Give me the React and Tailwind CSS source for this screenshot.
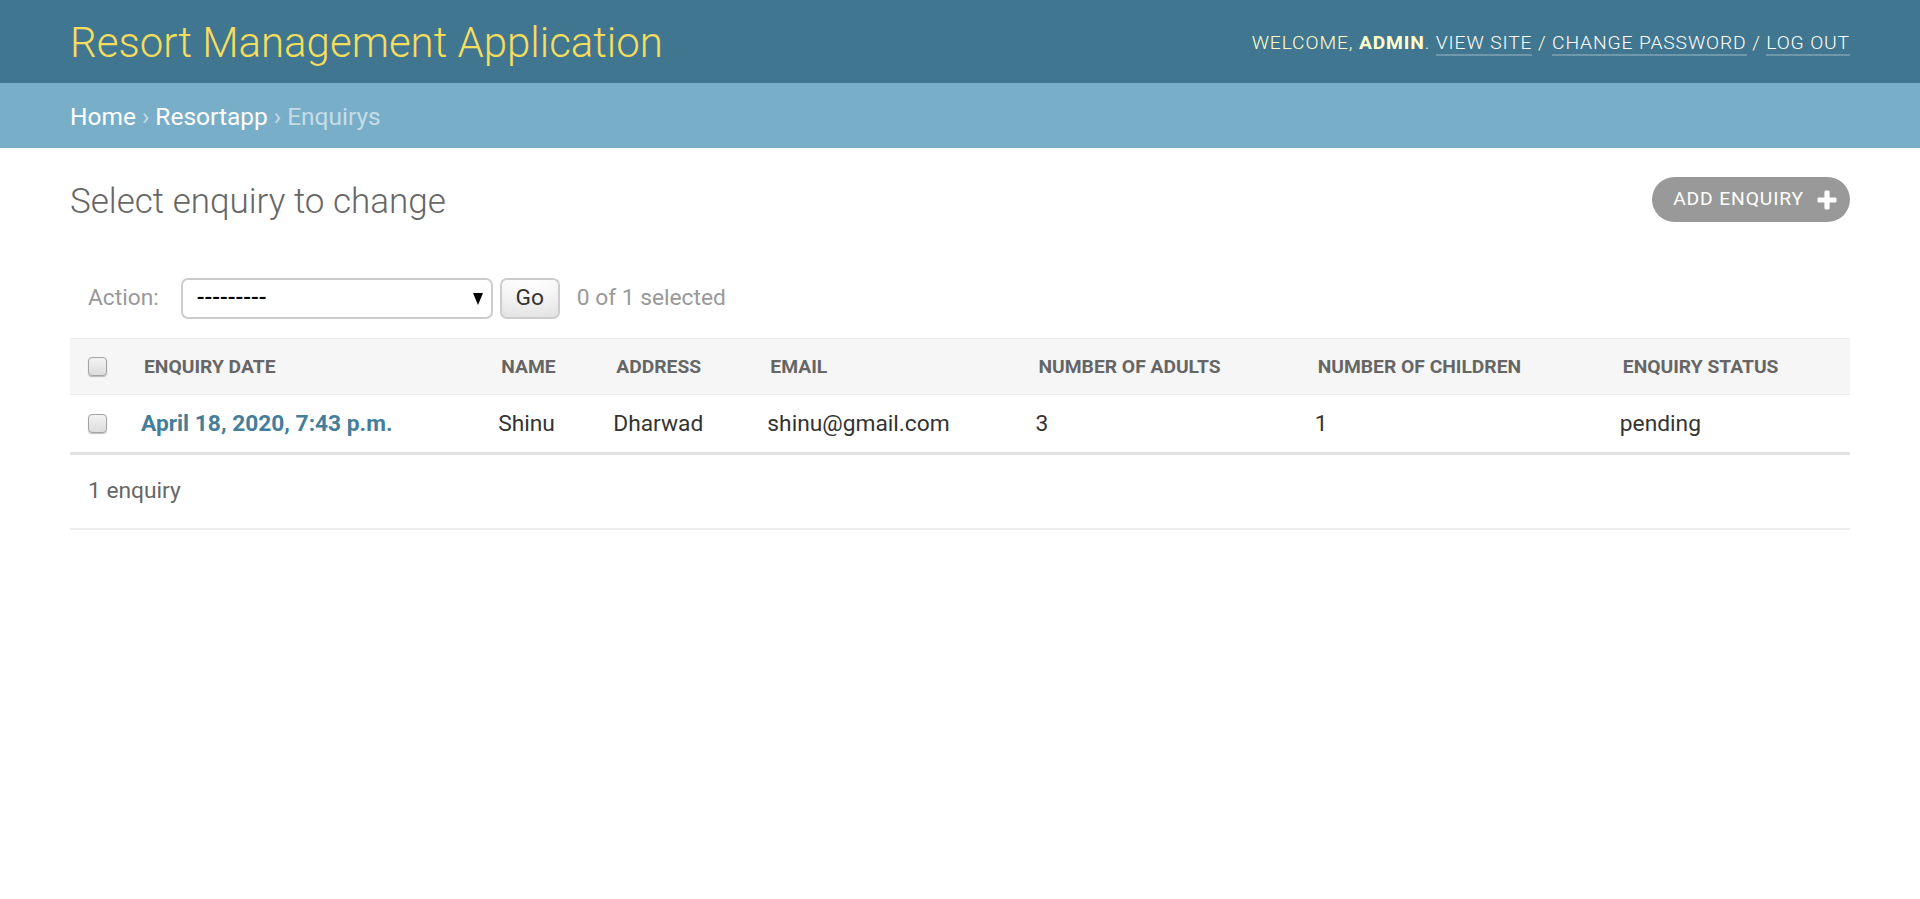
import React from "react";

const columns = [
  { label: "Enquiry date", width: "w-[357px]" },
  { label: "Name", width: "w-[115px]" },
  { label: "Address", width: "w-[154px]" },
  { label: "Email", width: "w-[268px]" },
  { label: "Number of adults", width: "w-[279px]" },
  { label: "Number of children", width: "w-[305px]" },
  { label: "Enquiry status", width: "w-[244px]" },
];

const rows = [
  {
    date: "April 18, 2020, 7:43 p.m.",
    name: "Shinu",
    address: "Dharwad",
    email: "shinu@gmail.com",
    adults: 3,
    children: 1,
    status: "pending",
  },
];

function Checkbox() {
  return (
    <span className="block h-[19px] w-[19px] rounded-[4px] border border-[#a3a3a3] bg-gradient-to-b from-[#f3f3f3] to-[#dcdcdc] shadow-[0_1px_1px_rgba(0,0,0,0.25)]" />
  );
}

function PlusIcon() {
  return (
    <svg viewBox="0 0 1792 1792" className="h-[24px] w-[24px]" fill="#fff">
      <path d="M1600 796v192q0 40-28 68t-68 28h-416v416q0 40-28 68t-68 28h-192q-40 0-68-28t-28-68v-416h-416q-40 0-68-28t-28-68v-192q0-40 28-68t68-28h416v-416q0-40 28-68t68-28h192q40 0 68 28t28 68v416h416q40 0 68 28t28 68z" />
    </svg>
  );
}

function Header() {
  return (
    <header className="flex h-[83px] items-center justify-between bg-[#417690] px-[70px] pt-[2px]">
      <h1 className="text-[42px] font-light leading-none text-[#f5dd5d]">
        Resort Management Application
      </h1>
      <div className="text-[19.25px] font-light uppercase leading-none tracking-[0.875px] text-[#ffc]">
        Welcome, <strong className="font-bold">admin</strong>.{" "}
        <a href="#" className="border-b-2 border-white/25 text-white">
          View site
        </a>{" "}
        /{" "}
        <a href="#" className="border-b-2 border-white/25 text-white">
          Change password
        </a>{" "}
        /{" "}
        <a href="#" className="border-b-2 border-white/25 text-white">
          Log out
        </a>
      </div>
    </header>
  );
}

function Breadcrumbs() {
  return (
    <div className="flex h-[65px] items-center bg-[#79aec8] px-[70px] pt-[3px] text-[24.5px] text-[#c4dce8]">
      <a href="#" className="text-white">Home</a>
      <span className="px-[6px]">›</span>
      <a href="#" className="text-white">Resortapp</a>
      <span className="px-[6px]">›</span>
      <span>Enquirys</span>
    </div>
  );
}

function Actions() {
  return (
    <div className="mt-[56px] flex h-[41px] items-center pl-[18px] text-[22.75px] text-[#999]">
      <span>Action:</span>
      <div className="ml-[22px] flex h-[41px] w-[312px] items-center justify-between rounded-[7px] border-2 border-[#ccc] bg-white pl-[14px] pr-[8px] text-[22.75px] font-medium text-black">
        <span>---------</span>
        <svg viewBox="0 0 10 12" className="h-[12px] w-[10px]" fill="#000">
          <polygon points="0,0 10,0 5,12" />
        </svg>
      </div>
      <button
        type="button"
        className="ml-[7px] h-[41px] w-[60px] rounded-[7px] border-2 border-[#ccc] bg-white text-[22.75px] text-[#333] shadow-[inset_0_-26px_35px_-17px_rgba(0,0,0,0.15)]"
      >
        Go
      </button>
      <span className="ml-[17px]">0 of 1 selected</span>
    </div>
  );
}

function ResultTable() {
  return (
    <table className="mt-[19px] w-full table-fixed border-collapse">
      <colgroup>
        <col className="w-[57px]" />
        {columns.map((c) => (
          <col key={c.label} className={c.width} />
        ))}
      </colgroup>
      <thead>
        <tr className="h-[56px] border-y border-[#eee] bg-[#f6f6f6]">
          <th className="pl-[18px] align-middle">
            <Checkbox />
          </th>
          {columns.map((c) => (
            <th
              key={c.label}
              className="whitespace-nowrap px-[17px] pt-[1px] text-left align-middle text-[19.25px] font-bold uppercase text-[#666]"
            >
              {c.label}
            </th>
          ))}
        </tr>
      </thead>
      <tbody>
        {rows.map((r, i) => (
          <tr key={i} className="h-[59px] border-b-[3px] border-[#e2e2e2] text-[22.75px] leading-[28px] text-[#333]">
            <td className="pl-[18px] align-middle">
              <Checkbox />
            </td>
            <th className="px-[14px] text-left align-middle font-bold">
              <a href="#" className="text-[#447e9b]">{r.date}</a>
            </th>
            <td className="px-[14px] align-middle">{r.name}</td>
            <td className="px-[14px] align-middle">{r.address}</td>
            <td className="px-[14px] align-middle">{r.email}</td>
            <td className="px-[14px] align-middle">{r.adults}</td>
            <td className="px-[14px] align-middle">{r.children}</td>
            <td className="px-[14px] align-middle">{r.status}</td>
          </tr>
        ))}
      </tbody>
    </table>
  );
}

export default function App() {
  return (
    <div className="min-h-screen bg-white font-[family-name:Roboto,sans-serif] text-[#333]">
      <Header />
      <Breadcrumbs />
      <main className="px-[70px]">
        <div className="mt-[29px] flex h-[45px] items-center justify-between">
          <h1 className="pt-[6px] text-[35px] font-light text-[#666]">Select enquiry to change</h1>
          <a
            href="#"
            className="flex h-[45px] items-center gap-[11px] rounded-full bg-[#999] pl-[21px] pr-[11px] text-[19.25px] uppercase tracking-[0.875px] text-white"
          >
            Add enquiry
            <PlusIcon />
          </a>
        </div>
        <Actions />
        <ResultTable />
        <div className="flex h-[75px] items-center border-b-2 border-[#eee] pl-[18px] text-[22.75px] text-[#666]">
          1 enquiry
        </div>
      </main>
    </div>
  );
}
